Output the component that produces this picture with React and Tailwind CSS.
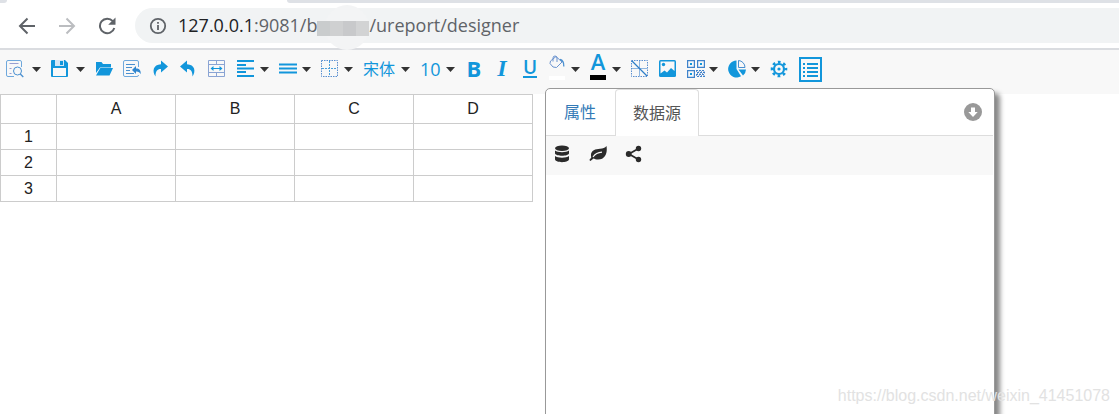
import { clsx } from 'clsx';

const BLUE = '#1296db';

function Icon({ children, className = 'w-[18px] h-[18px]', viewBox = '0 0 18 18' }) {
  return (
    <svg viewBox={viewBox} className={clsx('shrink-0', className)} fill="none" aria-hidden="true">
      {children}
    </svg>
  );
}

/* ── TOOLBAR ICONS ── */
const PreviewIcon = () => (
  <Icon>
    <path d="M8 16.500H2A1.500 1.500 0 0 1 .5 15V2A1.500 1.500 0 0 1 2 .5h12A1.500 1.500 0 0 1 15.500 2v5" stroke="#6fa8dc" />
    <path d="M3.500 3.500h9M3.500 8.500h2M3.500 13.500h2" stroke="#9a9fd0" />
    <circle cx="11.500" cy="11" r="4" stroke="#4a90d0" />
    <path d="M14.300 14l3 3" stroke="#4a90d0" strokeWidth="1.300" />
  </Icon>
);

const SaveIcon = () => (
  <Icon>
    <path d="M1 0h13l3 3v13a1 1 0 0 1-1 1H1a1 1 0 0 1-1-1V1a1 1 0 0 1 1-1z" fill={BLUE} />
    <path d="M4 0h9v6H4z" fill="#d4e6f5" />
    <path d="M9 1h3v4H9z" fill={BLUE} />
    <path d="M2 8h13v8H2z" fill="#f8f8f8" />
  </Icon>
);

const OpenIcon = () => (
  <Icon>
    <path d="M1 2h5.500l1.500 2h8v3.500H5L1 13z" fill={BLUE} />
    <path d="M5.300 8H18l-3.500 7.500H1z" fill={BLUE} />
  </Icon>
);

const ImportIcon = () => (
  <Icon>
    <path d="M15.500 7V2A1.500 1.500 0 0 0 14 .5H2A1.500 1.500 0 0 0 .5 2v13A1.500 1.500 0 0 0 2 16.500h12a1.500 1.500 0 0 0 1.500-1.500" stroke="#6fa8dc" />
    <path d="M3 4.500h9M3 7.500h6M3 10.500h4M3 13.500h8" stroke="#4a90d0" />
    <path d="M9 10l4-4v2.500c3.500 0 5 2 4.700 5.800-1-2.200-2.200-2.900-4.700-2.800V14z" fill="#2f86cf" />
  </Icon>
);

const RedoIcon = () => (
  <Icon>
    <path d="M10 .5l7 6-7 6V9C6.500 8.800 4.500 11 4.500 16.500 1 11.500 2 4.500 10 4.300z" fill={BLUE} />
  </Icon>
);

const UndoIcon = () => (
  <Icon>
    <path d="M8 .5L1 6.500l7 6V9c3.500-.2 5.500 2 5.500 7.500C17 11.500 16 4.500 8 4.300z" fill={BLUE} />
  </Icon>
);

const MergeIcon = () => (
  <Icon>
    <path d="M.5.5h16v16H.5zM.5 4.500h16M.5 12.500h16M8.500.5v4M8.500 12.500v4" stroke="#8aa4d4" />
    <path d="M4 8.500h9" stroke={BLUE} />
    <path d="M2.500 8.500l3-2.500v5zM14.500 8.500l-3-2.500v5z" fill={BLUE} />
  </Icon>
);

const AlignIcon = () => (
  <Icon>
    <path d="M0 1h17M0 5h9M0 8.500h17M0 12h9M0 16h17" stroke={BLUE} strokeWidth="2" />
  </Icon>
);

const MiddleIcon = () => (
  <Icon>
    <path d="M0 4.500h18M0 8.500h18M0 12.500h18" stroke={BLUE} strokeWidth="1.800" />
  </Icon>
);

const BorderIcon = () => (
  <Icon>
    <path d="M.5.5h16v16H.5z" stroke="#5a8fd0" strokeDasharray="1.500 1" />
    <path d="M8.500 1v15M1 8.500h15" stroke="#4aa0dc" strokeDasharray="2 1" />
  </Icon>
);

const SlashIcon = () => (
  <Icon>
    <path d="M.5.5h16v16H.5z" stroke="#5a8fd0" strokeDasharray="1.500 1" />
    <path d="M8.500 1v15M1 8.500h15" stroke="#8fb6e0" />
    <path d="M1 1l15 15" stroke="#2f7fc8" strokeWidth="1.200" />
  </Icon>
);

const BucketIcon = () => (
  <Icon className="w-4 h-4" viewBox="0 0 16 16">
    <path d="M7 1.500l6 5.500-5.500 5.500-3.500-.5L1 8.500 1.500 6zM4 6.500V3a2 2 0 0 1 4 0v4" stroke="#6b93cf" />
    <path d="M11 4.500c2.500.5 4 2 3.800 7" stroke="#4a90d0" strokeWidth="1.300" />
  </Icon>
);

const ImageIcon = () => (
  <Icon>
    <rect x="0" y="0" width="17" height="17" rx="1.500" fill={BLUE} />
    <path d="M1.500 1.500h14v9.500l-3.500-3-4 4.500-2.500-2-4 3z" fill="#f8f8f8" />
    <circle cx="4.500" cy="4.500" r="1.700" fill={BLUE} />
  </Icon>
);

const QrIcon = () => (
  <Icon>
    <path d="M.6.6h6.800v6.800H.6zM10.600.6h6.800v6.800h-6.800zM.6 10.600h6.800v6.800H.6z" stroke="#3f83cb" strokeWidth="1.200" />
    <path d="M3 3h2v2H3zM13 3h2v2h-2zM3 13h2v2H3z" fill={BLUE} />
    <path d="M9 10.500h9M10 12.500h8M9 14.500h9M10 16.500h8" stroke="#3f83cb" strokeDasharray="2 1" />
    <path d="M9 11.500h9M10 13.500h8M9 15.500h9" stroke="#7a9cd0" strokeDasharray="1 1.500" />
  </Icon>
);

const PieIcon = () => (
  <Icon>
    <path d="M8.500 9V.5A8.500 8.500 0 1 0 13 16.300z" fill={BLUE} />
    <path d="M10.500 7.500v-7a7 7 0 0 1 6.500 7z" stroke="#4a90d0" />
    <path d="M10.500 9.500H18a8 8 0 0 1-3 6z" fill={BLUE} />
  </Icon>
);

const GearIcon = () => (
  <Icon>
    <circle cx="9" cy="9" r="7" stroke={BLUE} strokeWidth="2.600" strokeDasharray="2.700 2.798" strokeDashoffset="1.350" />
    <circle cx="9" cy="9" r="5" stroke={BLUE} strokeWidth="2.200" />
    <circle cx="9" cy="9" r="1.600" fill={BLUE} />
  </Icon>
);

const ListIcon = () => (
  <Icon className="w-[23px] h-[25px]" viewBox="0 0 23 25">
    <path d="M1 1h21v23H1z" stroke={BLUE} strokeWidth="2" />
    <path d="M4 7h2M4 11h2M4 15h2M4 19h2" stroke={BLUE} strokeWidth="2" />
    <path d="M8 7h11M8 11h11M8 15h11M8 19h11" stroke={BLUE} strokeWidth="2" />
  </Icon>
);

const FillColor = () => (
  <span className="flex w-4 flex-col items-center pb-1">
    <BucketIcon />
    <span className="mt-[5px] h-1 w-4 bg-white" />
  </span>
);

const FontColor = () => (
  <span className="flex w-4 flex-col items-center pb-1">
    <span className="h-5 text-[22px] leading-3 font-semibold">A</span>
    <span className="h-[5px] w-4 bg-black" />
  </span>
);

const tools = [
  { name: 'Preview', width: 'w-[35px]', icon: <PreviewIcon />, menu: true },
  { name: 'Save', width: 'w-[34px]', icon: <SaveIcon />, menu: true },
  { name: 'Open', width: 'w-[18px]', icon: <OpenIcon /> },
  { name: 'Import', width: 'w-[18px]', icon: <ImportIcon /> },
  { name: 'Redo', width: 'w-[18px]', icon: <RedoIcon /> },
  { name: 'Undo', width: 'w-[18px]', icon: <UndoIcon /> },
  { name: 'Merge cells', width: 'w-5', icon: <MergeIcon /> },
  { name: 'Horizontal align', width: 'w-8', icon: <AlignIcon />, menu: true },
  { name: 'Vertical align', width: 'w-8', icon: <MiddleIcon />, menu: true },
  { name: 'Border', width: 'w-8', icon: <BorderIcon />, menu: true },
  { name: 'Font family', width: 'w-[47px]', icon: <span className="text-base leading-5">宋体</span>, menu: true },
  { name: 'Font size', width: 'w-[35px]', icon: <span className="text-[18px] leading-5">10</span>, menu: true },
  { name: 'Bold', width: 'w-[18px]', icon: <span className="pb-[2px] text-[22px] leading-6 font-bold">B</span> },
  { name: 'Italic', width: 'w-[18px]', icon: <span className="pb-[2px] font-['Liberation_Serif',serif] text-[24px] leading-6 font-bold italic">I</span> },
  { name: 'Underline', width: 'w-[18px]', icon: <span className="h-[18px] border-b-2 border-[#1296db] text-[19px] leading-[14px] font-semibold">U</span> },
  { name: 'Fill color', width: 'w-[31px]', icon: <FillColor />, menu: true },
  { name: 'Font color', width: 'w-[31px]', icon: <FontColor />, menu: true },
  { name: 'Slash header', width: 'w-[18px]', icon: <SlashIcon /> },
  { name: 'Image', width: 'w-[18px]', icon: <ImageIcon /> },
  { name: 'QR code', width: 'w-[31px]', icon: <QrIcon />, menu: true },
  { name: 'Chart', width: 'w-8', icon: <PieIcon />, menu: true },
  { name: 'Settings', width: 'w-[18px]', icon: <GearIcon /> },
  { name: 'Properties', width: 'w-6', icon: <ListIcon /> },
];

function Caret() {
  return (
    <svg viewBox="0 0 9 5" className="h-[5px] w-[9px] shrink-0" aria-hidden="true">
      <path d="M0 0h9L4.500 5z" fill="#333" />
    </svg>
  );
}

function BrowserBar() {
  return (
    <header className="border-b-2 border-[#dadce0] bg-white">
      <div className="flex h-[3px] justify-between">
        <span className="w-[7px] rounded-br-lg bg-[#dee1e6]" />
        <span className="ml-[280px] flex-1 rounded-bl-lg bg-[#dee1e6]" />
      </div>
      <div className="flex items-center pt-[5px] pb-[5px] pl-[18px]">
        <div className="flex items-center gap-[22px]">
          <button type="button" aria-label="Back">
            <Icon>
              <path d="M17 9H2.500M9.500 1.500L2 9l7.500 7.500" stroke="#5f6368" strokeWidth="2" />
            </Icon>
          </button>
          <button type="button" aria-label="Forward">
            <Icon>
              <path d="M1 9h14.500M8.500 1.500L16 9l-7.500 7.500" stroke="#bbbdc0" strokeWidth="2" />
            </Icon>
          </button>
          <button type="button" aria-label="Reload">
            <Icon>
              <path d="M14.800 4.200A7.300 7.300 0 1 0 16.300 11" stroke="#5f6368" strokeWidth="2" />
              <path d="M17.500.5v7.300h-7.300z" fill="#5f6368" />
            </Icon>
          </button>
        </div>
        <div className="ml-[19px] flex h-[35px] flex-1 items-center rounded-l-full bg-[#f1f3f4] pl-[14px]">
          <Icon>
            <circle cx="9" cy="9" r="7.200" stroke="#5f6368" strokeWidth="1.800" />
            <path d="M9 8v5M9 5v1.800" stroke="#5f6368" strokeWidth="1.800" />
          </Icon>
          <p className="ml-[11px] flex items-center pb-px text-[18px] leading-6 text-[#5f6368]">
            <span className="text-[#202124]">127.0.0.1</span>
            <span>:9081/b</span>
            <span className="relative mt-[6px] flex h-[15px] w-[52px]">
              <span className="absolute -top-4 left-2 h-[45px] w-[44px] rounded-full bg-[#f3f4f5]" />
              <span className="relative flex-1 bg-[#c9cccd]" />
              <span className="relative flex-1 bg-[#cfd0d1]" />
              <span className="relative flex-1 bg-[#c8c9cb]" />
              <span className="relative flex-1 bg-[#d2d3d4]" />
            </span>
            <span>/ureport/designer</span>
          </p>
        </div>
      </div>
    </header>
  );
}

function Toolbar() {
  return (
    <div className="flex h-11 items-center gap-[10px] bg-[#f8f8f8] pb-[6px] pl-[6px] text-[#1296db]">
      {tools.map(tool => (
        <button
          key={tool.name}
          type="button"
          aria-label={tool.name}
          className={clsx('flex h-7 shrink-0 items-center', tool.width, tool.menu ? 'justify-between' : 'justify-center')}
        >
          {tool.icon}
          {tool.menu && <Caret />}
        </button>
      ))}
    </div>
  );
}

function Sheet() {
  const columns = ['A', 'B', 'C', 'D'];

  return (
    <table className="h-[108px] w-[533px] shrink-0 table-fixed border-collapse self-start text-center font-['Liberation_Sans',sans-serif] text-base leading-5 text-[#222]">
      <thead>
        <tr className="h-[29px]">
          <th className="w-[56px] border border-[#ccc]" />
          {columns.map(column => (
            <th key={column} className="border border-[#ccc] font-normal">{column}</th>
          ))}
        </tr>
      </thead>
      <tbody>
        {[1, 2, 3].map(row => (
          <tr key={row} className="h-[26px]">
            <th className="border border-[#ccc] font-normal">{row}</th>
            {columns.map(column => (
              <td key={column} className="border border-[#ccc]" />
            ))}
          </tr>
        ))}
      </tbody>
    </table>
  );
}

function SidePanel() {
  return (
    <aside className="relative -mt-[6px] -mb-2 ml-3 w-[450px] rounded-[5px] border border-[#999] bg-white pr-px shadow-[5px_5px_5px_#888]">
      <div className="flex h-[47px] items-stretch border-b border-[#ddd]" role="tablist">
        <button type="button" role="tab" aria-selected="false" className="mr-px px-[18px] text-base text-[#337ab7]">
          属性
        </button>
        <button type="button" role="tab" aria-selected="true" className="-mb-px rounded-t border border-b-0 border-[#ddd] bg-white px-[17px] text-base text-[#555]">
          数据源
        </button>
        <button type="button" aria-label="Collapse" className="mr-[11px] ml-auto pb-px">
          <Icon>
            <circle cx="9" cy="9" r="9" fill="#999" />
            <path d="M7 4.500h4V9h2.700L9 14 4.300 9H7z" fill="#fff" />
          </Icon>
        </button>
      </div>
      <div className="flex h-[39px] items-center gap-[18px] bg-[#f8f8f8] pb-1 pl-[7px] text-[#2b2b2b]">
        <button type="button" aria-label="Database">
          <Icon>
            <ellipse cx="9" cy="3.300" rx="7" ry="2.800" fill="currentColor" />
            <path d="M2 5.500c2.500 2.200 11.500 2.200 14 0v3c-1 3-13 3-14 0z" fill="currentColor" />
            <path d="M2 11c2.500 2.200 11.500 2.200 14 0v3.500c-1 3.500-13 3.500-14 0z" fill="currentColor" />
          </Icon>
        </button>
        <button type="button" aria-label="Spring bean">
          <Icon>
            <path d="M17.500 1C18.500 7 17 14.500 9 14.500c-2 0-3.500-.5-4.500-1L1.500 16 .3 15l2-2.500C.5 6 6 4 11 3.800c3 0 5-1 6.500-2.800z" fill="currentColor" />
            <path d="M4 12c2-3 5-4.500 9-4.800" stroke="#f8f8f8" strokeWidth="1.200" />
          </Icon>
        </button>
        <button type="button" aria-label="Connection">
          <Icon>
            <path d="M13.500 3.500L4 9l9.500 5.500" stroke="currentColor" strokeWidth="1.800" />
            <circle cx="13.500" cy="3.500" r="2.700" fill="currentColor" />
            <circle cx="3.700" cy="9" r="2.900" fill="currentColor" />
            <circle cx="13.500" cy="14.500" r="2.700" fill="currentColor" />
          </Icon>
        </button>
      </div>
    </aside>
  );
}

export default function App() {
  return (
    <div className="relative flex h-screen flex-col overflow-hidden bg-white font-['Open_Sans','Noto_Sans_CJK_SC',sans-serif]">
      <BrowserBar />
      <Toolbar />
      <main className="flex flex-1">
        <Sheet />
        <SidePanel />
      </main>
      <span className="absolute right-[9px] bottom-2 font-['Liberation_Sans',sans-serif] text-base leading-5 text-[#e2e2e2]">
        https://blog.csdn.net/weixin_41451078
      </span>
    </div>
  );
}
